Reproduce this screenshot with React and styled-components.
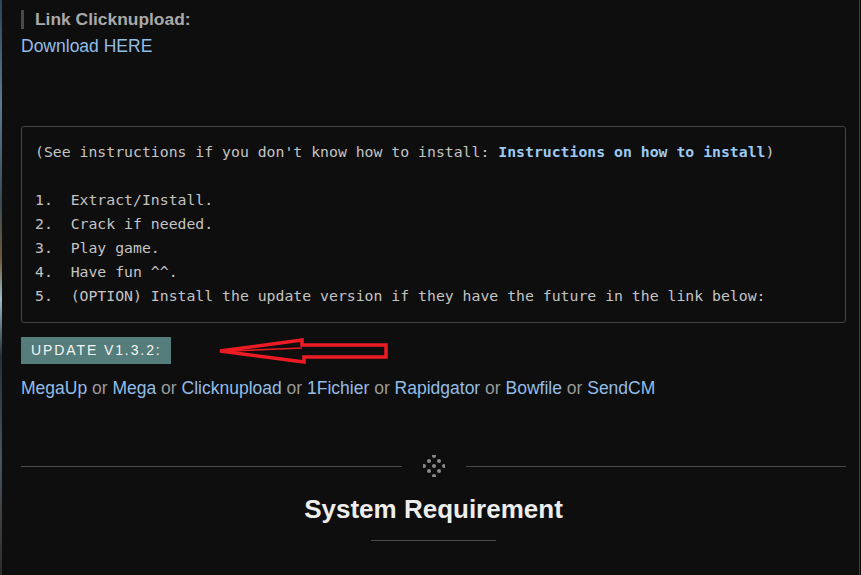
import styled, { createGlobalStyle } from "styled-components";

const GlobalStyle = createGlobalStyle`
  html, body {
    margin: 0;
    padding: 0;
    background: #0b0b0b;
  }
  body {
    background:
      linear-gradient(180deg, #2c4454 0%, #5d7b8f 18%, #3a4a55 35%, #6b5a3c 45%, #9fb9c4 52%, #24303a 62%, #4a5560 80%, #302c26 100%) left top / 2px 100% no-repeat,
      #0b0b0b;
  }
`;

const steps = [
  "Extract/Install.",
  "Crack if needed.",
  "Play game.",
  "Have fun ^^.",
  "(OPTION) Install the update version if they have the future in the link below:",
];

const mirrors = ["MegaUp", "Mega", "Clicknupload", "1Fichier", "Rapidgator", "Bowfile", "SendCM"];

export default function App() {
  return (
    <>
      <GlobalStyle />
      <Panel>
        <Quote>Link Clicknupload:</Quote>
        <Download href="#">Download HERE</Download>

        <Instructions>
          {"(See instructions if you don't know how to install: "}
          <strong>
            <a href="#">Instructions on how to install</a>
          </strong>
          {")\n\n"}
          {steps.map((s, i) => `${i + 1}.  ${s}`).join("\n")}
        </Instructions>

        <BadgeRow>
          <Badge>Update v1.3.2:</Badge>
          <Arrow width="172" height="27" viewBox="0 0 172 27">
            <polygon
              points="3,14 85,3 85,8 169,8 169,20 87,20 87,25"
              fill="none"
              stroke="#ed1c24"
              strokeWidth="3.5"
              strokeLinejoin="miter"
            />
            <line x1="14" y1="14" x2="85" y2="11" stroke="#ed1c24" strokeWidth="1.5" />
          </Arrow>
        </BadgeRow>

        <Mirrors>
          {mirrors.map((m, i) => (
            <span key={m}>
              {i > 0 && <Or> or </Or>}
              <a href="#">{m}</a>
            </span>
          ))}
        </Mirrors>

        <Divider>
          <Rule />
          <svg width="22" height="22" viewBox="0 0 22 22">
            {[-1, 0, 1].flatMap((a) =>
              [-1, 0, 1].map((b) => (
                <circle
                  key={`${a}${b}`}
                  cx={11 + (a - b) * 5}
                  cy={11 + (a + b) * 5}
                  r="2"
                  fill="#8a8a8a"
                />
              ))
            )}
          </svg>
          <Rule />
        </Divider>

        <Heading>System Requirement</Heading>
        <HeadingLine />
      </Panel>
    </>
  );
}

const Panel = styled.div`
  margin-left: 2px;
  width: 858px;
  min-height: 100vh;
  box-sizing: border-box;
  background: #0e0e0e;
  border-right: 1px solid #3e3e3e;
  padding: 10px 13px 0 19px;
  font-family: "Liberation Sans", Arial, sans-serif;
  display: flex;
  flex-direction: column;
  align-items: stretch;

  a {
    color: #93bde6;
    text-decoration: none;
  }
`;

const Quote = styled.div`
  border-left: 3px solid #4a4a4a;
  padding-left: 11px;
  line-height: 19px;
  font-size: 17.4px;
  font-weight: bold;
  color: #a9a9a9;
`;

const Download = styled.a`
  display: block;
  align-self: flex-start;
  margin-top: 7px;
  line-height: 20px;
  font-size: 17.5px;
`;

const Instructions = styled.pre`
  margin: 70px 0 0;
  border: 1px solid #444;
  border-radius: 3px;
  padding: 13px 13px 14px;
  font-family: "DejaVu Sans Mono", "Liberation Mono", monospace;
  font-size: 14.8px;
  line-height: 24px;
  color: #c4c4c4;
  white-space: pre-wrap;

  strong a {
    color: #9ccaf2;
  }
`;

const BadgeRow = styled.div`
  margin-top: 14px;
  display: flex;
  align-items: center;
  gap: 46px;
`;

const Badge = styled.span`
  display: inline-block;
  background: #557d7c;
  color: #f4f4f4;
  font-size: 14px;
  line-height: 27px;
  padding: 0 9px 0 10px;
  letter-spacing: 1.9px;
  text-transform: uppercase;
`;

const Arrow = styled.svg`
  display: block;
`;

const Mirrors = styled.div`
  margin-top: 13px;
  font-size: 17.5px;
  line-height: 22px;
`;

const Or = styled.span`
  color: #9a9a9a;
`;

const Divider = styled.div`
  margin-top: 56px;
  display: flex;
  align-items: center;
  gap: 21px;
`;

const Rule = styled.div`
  flex: 1;
  height: 1px;
  background: #4a4a4a;
`;

const Heading = styled.h2`
  margin: 16px 0 0;
  text-align: center;
  font-size: 26px;
  line-height: 32px;
  font-weight: bold;
  color: #ededed;
`;

const HeadingLine = styled.div`
  align-self: center;
  width: 125px;
  height: 1px;
  margin-top: 15px;
  background: #4a4a4a;
`;
